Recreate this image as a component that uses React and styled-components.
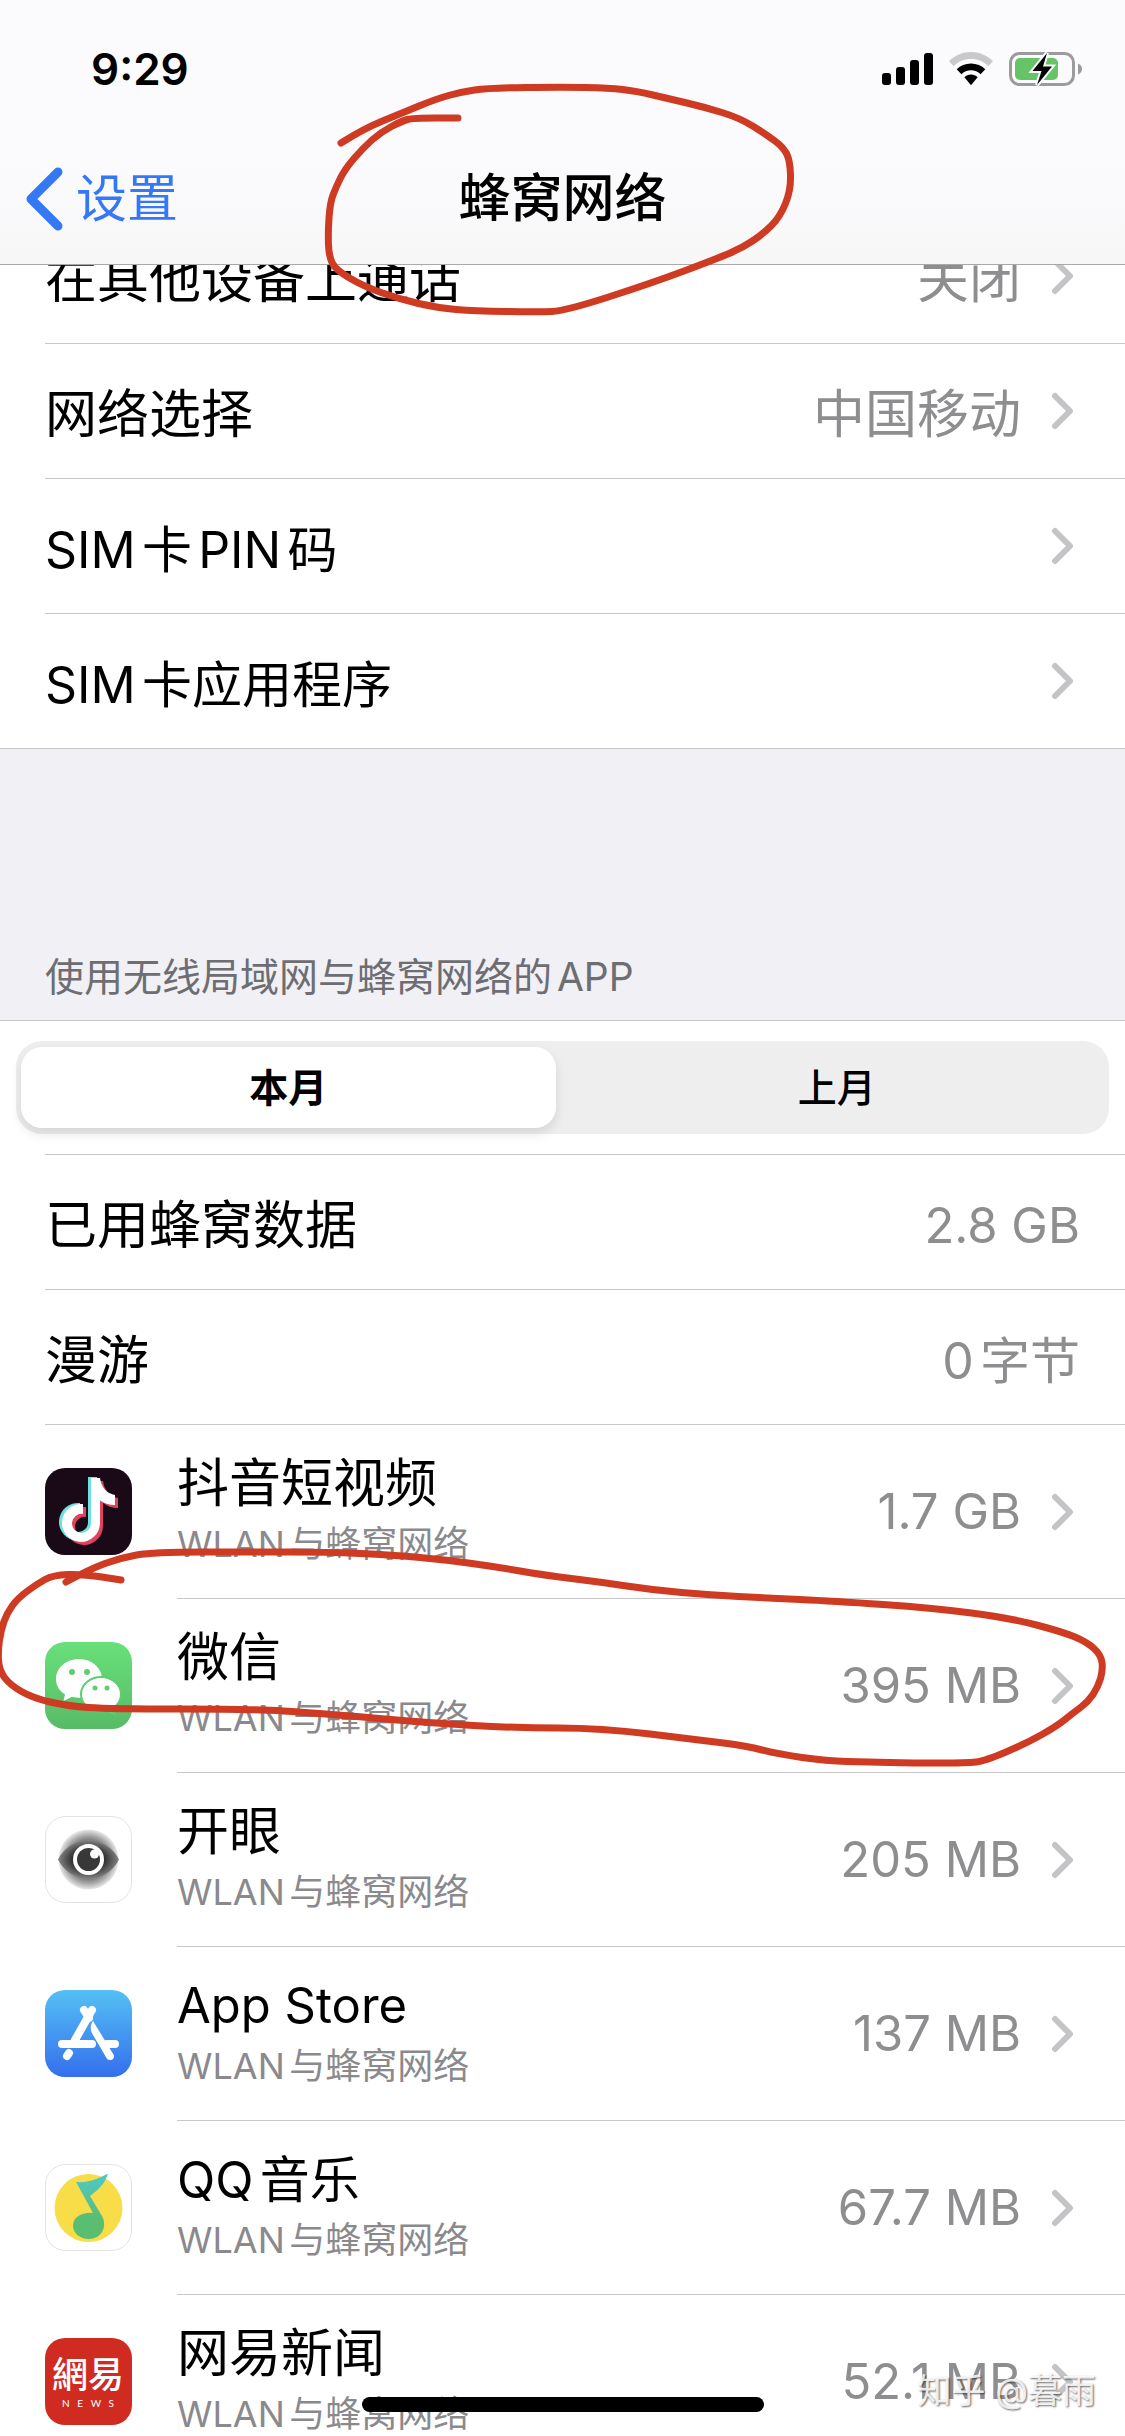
import { useState } from "react";
import styled, { createGlobalStyle } from "styled-components";

const GlobalStyle = createGlobalStyle`
  * {
    box-sizing: border-box;
  }
  body {
    margin: 0;
    background-color: #ffffff;
    font-family: Inter, "Noto Sans CJK SC", sans-serif;
    text-autospace: normal;
  }
  button {
    border: none;
    padding: 0;
    background: none;
    font-family: inherit;
    cursor: pointer;
  }
`;

const Screen = styled.div`
  position: relative;
  display: flex;
  flex-direction: column;
  height: 100vh;
  overflow: hidden;
`;

const Header = styled.header`
  z-index: 1;
  flex: none;
  background: linear-gradient(#fbfbfd 60%, #f7f7f8);
  border-bottom: 1px solid #a9a9ac;
`;

const StatusBar = styled.div`
  display: flex;
  justify-content: space-between;
  align-items: center;
  height: 132px;
  padding: 6px 42px 0 91px;
`;

const Time = styled.span`
  font-size: 44px;
  font-weight: 600;
  line-height: 60px;
`;

const StatusIcons = styled.div`
  display: flex;
  align-items: center;
  gap: 16px;
`;

const NavBar = styled.nav`
  display: grid;
  grid-template-columns: 1fr auto 1fr;
  align-items: center;
  height: 132px;
  padding: 2px 23px 0;
`;

const BackButton = styled.button`
  display: flex;
  align-items: center;
  justify-self: start;
  gap: 11px;
  color: #3578f6;
  font-size: 51px;
  line-height: 60px;
`;

const Title = styled.h1`
  margin: 0;
  font-size: 52px;
  font-weight: 500;
  line-height: 60px;
`;

/* the list is scrolled so that its first row is partly under the header */
const Content = styled.main`
  flex: 1;
  min-height: 0;
  margin-top: -56px;
  overflow: hidden;
`;

const Group = styled.div`
  background-color: #ffffff;
  border-top: ${(props) => (props.$topLine ? "1px solid #c6c6c8" : "none")};
  border-bottom: 1px solid #c6c6c8;
`;

const Row = styled.div`
  display: flex;
  align-items: center;
  justify-content: space-between;
  min-height: 135px;
  margin-left: 45px;
  padding-right: ${(props) => (props.href ? 51 : 45)}px;
  border-bottom: 1px solid #c8c8ca;
  color: #000000;
  line-height: 60px;
  text-decoration: none;

  ${Group} > &:last-child {
    min-height: 134px;
    border-bottom: none;
  }
`;

const sizes = { cjk: 52, mixed: 50, latin: 49 };

const Label = styled.span`
  padding-top: 7px;
  font-size: ${(props) => sizes[props.$script || "cjk"]}px;
`;

const Value = styled(Label)`
  color: #8e8e90;
`;

const Trailing = styled.span`
  display: flex;
  align-items: center;
  gap: 30px;
`;

const SectionTitle = styled.h2`
  margin: 0;
  padding: 198px 45px 13px;
  background-color: #f0f0f5;
  color: #6d6d72;
  font-size: 39px;
  font-weight: 400;
  line-height: 60px;
`;

const SegmentRow = styled.div`
  padding: 20px 16px;
`;

const Segments = styled.div`
  display: flex;
  gap: 14px;
  padding: 6px 5px;
  border-radius: 26px;
  background-color: #eeeeee;
`;

const Segment = styled.button`
  flex: 1;
  height: 81px;
  padding-bottom: 6px;
  border-radius: 21px;
  color: #000000;
  background-color: ${(props) => (props.$active ? "#ffffff" : "transparent")};
  box-shadow: ${(props) =>
    props.$active ? "0 6px 12px rgba(0, 0, 0, 0.1)" : "none"};
  font-size: 39px;
  font-weight: ${(props) => (props.$active ? 600 : 500)};
`;

const Rows = styled.div`
  border-top: 1px solid #c8c8ca;
  margin-left: 45px;

  ${Row} {
    margin-left: 0;
  }
`;

const AppRow = styled.a`
  display: flex;
  align-items: center;
  gap: 45px;
  padding-left: 45px;
  color: #000000;
  text-decoration: none;
`;

const AppBody = styled.div`
  flex: 1;
  display: flex;
  align-items: center;
  justify-content: space-between;
  min-height: 174px;
  padding-right: 51px;
  border-bottom: 1px solid #c8c8ca;
  line-height: 60px;
`;

const AppText = styled.div`
  display: flex;
  flex-direction: column;
  padding-top: 4px;
`;

const AppName = styled.span`
  font-size: ${(props) => sizes[props.$script || "cjk"]}px;
`;

const AppNote = styled.small`
  color: #8a8a8d;
  font-size: 36px;
`;

const Usage = styled.span`
  color: #8e8e90;
  font-size: 49px;
`;

const AppIcon = styled.svg`
  flex: none;
  width: 87px;
  height: 87px;
  margin-bottom: 1px;
`;

const Strokes = styled.svg`
  position: absolute;
  z-index: 2;
  top: 0;
  left: 0;
  width: 100%;
  pointer-events: none;
  fill: none;
  stroke: #cf3a22;
  stroke-width: 7;
  stroke-linecap: round;
  stroke-linejoin: round;
`;

const HomeIndicator = styled.div`
  position: absolute;
  z-index: 2;
  bottom: 24px;
  left: 50%;
  width: 402px;
  height: 15px;
  border-radius: 8px;
  background-color: #000000;
  transform: translateX(-50%);
`;

const Watermark = styled.span`
  position: absolute;
  z-index: 2;
  right: 29px;
  bottom: 20px;
  color: rgba(255, 255, 255, 0.85);
  font-size: 34px;
  line-height: 50px;
  text-shadow: 1px 1px 2px rgba(0, 0, 0, 0.6);
`;

function SignalIcon() {
  return (
    <svg width="51" height="34" viewBox="0 0 51 34">
      <rect x="0" y="21" width="9" height="12" rx="3" />
      <rect x="14" y="15" width="9" height="18" rx="3" />
      <rect x="28" y="8" width="9" height="25" rx="3" />
      <rect x="42" y="1" width="9" height="32" rx="3" />
    </svg>
  );
}

function WifiIcon() {
  return (
    <svg width="44" height="34" viewBox="0 0 44 34">
      <path
        fill="#c9c9cb"
        d="M22 0C13.500 0 6 3.300 0 9.200L4.600 14C9.300 9.500 15.300 7 22 7s12.700 2.500 17.400 7L44 9.200C38 3.300 30.500 0 22 0Z"
      />
      <path d="M22 11.500c-5.600 0-10.600 2.200-14.300 5.800l4.700 4.900c2.500-2.500 5.900-4 9.600-4s7.100 1.500 9.600 4l4.700-4.900C32.600 13.700 27.600 11.500 22 11.500Z" />
      <path d="M22 22.500c-2.600 0-4.900 1-6.600 2.700L22 33.200l6.600-8C26.900 23.500 24.600 22.500 22 22.500Z" />
    </svg>
  );
}

function BatteryIcon() {
  return (
    <svg width="74" height="36" viewBox="0 0 74 36">
      <rect
        x="1.500"
        y="2.500"
        width="63"
        height="31"
        rx="9"
        fill="none"
        stroke="#9b9b9d"
        strokeWidth="3"
      />
      <path fill="#9b9b9d" d="M69 12.500c2.600 1 4 3 4 5.500s-1.400 4.500-4 5.500Z" />
      <rect x="6" y="7" width="43" height="22" rx="5" fill="#65c466" />
      <path
        d="M38 2L23.500 20h9L28 34 43 15.500h-9Z"
        stroke="#fbfbfd"
        strokeWidth="4"
        paintOrder="stroke"
      />
    </svg>
  );
}

function BackIcon() {
  return (
    <svg width="42" height="66" viewBox="0 0 42 66">
      <path
        d="M35 6L8 33l27 27"
        fill="none"
        stroke="#3578f6"
        strokeWidth="9"
        strokeLinecap="round"
        strokeLinejoin="round"
      />
    </svg>
  );
}

function Chevron() {
  return (
    <svg width="23" height="38" viewBox="0 0 23 38">
      <path
        d="M4 4l15 15L4 34"
        fill="none"
        stroke="#c4c4c7"
        strokeWidth="6"
        strokeLinecap="round"
        strokeLinejoin="round"
      />
    </svg>
  );
}

const NOTE =
  "M46 10H55C56 19 62 26 70 27V37C64 37 59 35 55 32V55A19 19 0 1 1 38 36V46A9.500 9.500 0 1 0 46 55Z";

function DouyinIcon() {
  return (
    <AppIcon viewBox="0 0 87 87">
      <rect width="87" height="87" rx="20" fill="#1a0a18" />
      <path d={NOTE} fill="#e0425f" transform="translate(3 3)" />
      <path d={NOTE} fill="#6fe0e0" transform="translate(-3 -1)" />
      <path d={NOTE} fill="#ffffff" />
    </AppIcon>
  );
}

function WechatIcon() {
  return (
    <AppIcon viewBox="0 0 87 87">
      <defs>
        <linearGradient id="wechat" x2="0" y2="1">
          <stop offset="0" stopColor="#68e07a" />
          <stop offset="1" stopColor="#58bb66" />
        </linearGradient>
      </defs>
      <rect width="87" height="87" rx="20" fill="url(#wechat)" />
      <path
        fill="#ffffff"
        d="M34 17C21 17 11 26 11 37c0 6.500 3.400 12 9 15.500L18.500 59l8.500-4.200c2.200.6 4.600 1 7 1 13 0 23-8.500 23-19S47 17 34 17Z"
      />
      <path
        fill="#ffffff"
        stroke="#5fcd70"
        strokeWidth="2"
        d="M56 35c-11 0-20 7.700-20 17.200s9 17.200 20 17.200c2.100 0 4.200-.3 6.200-.9l7 3.500-1.600-5.700C72.600 63 76 58 76 52.200 76 42.700 67 35 56 35Z"
      />
      <g fill="#5fcd70">
        <circle cx="27" cy="30" r="3" />
        <circle cx="42" cy="30" r="3" />
        <circle cx="50" cy="46" r="2.500" />
        <circle cx="62" cy="46" r="2.500" />
      </g>
    </AppIcon>
  );
}

function EyeIcon() {
  return (
    <AppIcon viewBox="0 0 87 87">
      <defs>
        <radialGradient id="glow">
          <stop offset="0.5" stopColor="#555555" />
          <stop offset="0.8" stopColor="#a8a8a8" />
          <stop offset="1" stopColor="#e9e9e9" />
        </radialGradient>
        <radialGradient id="lens">
          <stop offset="0.5" stopColor="#2b2b2b" />
          <stop offset="1" stopColor="#858585" />
        </radialGradient>
      </defs>
      <rect
        x="0.500"
        y="0.500"
        width="86"
        height="86"
        rx="20"
        fill="#ffffff"
        stroke="#e3e3e5"
      />
      <circle cx="43.500" cy="43.500" r="30" fill="url(#glow)" />
      <path
        fill="url(#lens)"
        d="M13 43.500C18 33 30 24 43.500 24S69 33 74 43.500C69 54 57 63 43.500 63S18 54 13 43.500Z"
      />
      <circle cx="43.500" cy="43.500" r="15.500" fill="#ffffff" />
      <circle cx="43.500" cy="43.500" r="11.500" fill="#383838" />
      <circle cx="49.500" cy="38" r="4.500" fill="#ffffff" />
    </AppIcon>
  );
}

function AppStoreIcon() {
  return (
    <AppIcon viewBox="0 0 87 87">
      <defs>
        <linearGradient id="store" x2="0" y2="1">
          <stop offset="0" stopColor="#55c0f5" />
          <stop offset="1" stopColor="#346fed" />
        </linearGradient>
      </defs>
      <rect width="87" height="87" rx="20" fill="url(#store)" />
      <g stroke="#ffffff" strokeWidth="8" strokeLinecap="round">
        <path d="M47 20L30 50M39 20l5 8M17 54H47M62 54h8M24 63l-2 3" />
      </g>
      <path
        fill="#ffffff"
        d="M48 31C45 35 45 40 48 45L61.500 68C64 72.500 71 69 68.500 64.500Z"
      />
    </AppIcon>
  );
}

function QQMusicIcon() {
  return (
    <AppIcon viewBox="0 0 87 87">
      <defs>
        <linearGradient id="qq" x2="0" y2="1">
          <stop offset="0" stopColor="#4cc9cc" />
          <stop offset="0.7" stopColor="#5bbd72" />
        </linearGradient>
      </defs>
      <rect
        x="0.500"
        y="0.500"
        width="86"
        height="86"
        rx="20"
        fill="#ffffff"
        stroke="#e3e3e5"
      />
      <circle cx="43.500" cy="44" r="34" fill="#f8dd49" />
      <path
        fill="url(#qq)"
        d="M31 18C42 19 53 15 63 9.500C60 20 52 27 45 32L57 52C63 63 56 75 44 75C35 75 28 69 28 62C28 53 37 48 48 49Z"
      />
    </AppIcon>
  );
}

function NeteaseIcon() {
  return (
    <AppIcon viewBox="0 0 87 87">
      <rect width="87" height="87" rx="20" fill="#d02b20" />
      <g fill="#ffffff" textAnchor="middle">
        <text
          x="43"
          y="50"
          fontSize="36"
          fontWeight="500"
          fontFamily="'Noto Sans CJK TC', sans-serif"
        >
          網易
        </text>
        <text x="43" y="69" fontSize="10" fontFamily="Lato, sans-serif">
          N&#160;&#160; E&#160;&#160; W&#160;&#160; S
        </text>
      </g>
    </AppIcon>
  );
}

const simRows = [
  { label: "在其他设备上通话", value: "关闭" },
  { label: "网络选择", value: "中国移动" },
  { label: "SIM卡PIN码", script: "mixed" },
  { label: "SIM卡应用程序", script: "mixed" },
];

const usageRows = [
  { label: "已用蜂窝数据", value: "2.8 GB", valueScript: "latin" },
  { label: "漫游", value: "0字节", valueScript: "mixed" },
];

const apps = [
  { name: "抖音短视频", usage: "1.7 GB", Icon: DouyinIcon },
  { name: "微信", usage: "395 MB", Icon: WechatIcon },
  { name: "开眼", usage: "205 MB", Icon: EyeIcon },
  { name: "App Store", usage: "137 MB", Icon: AppStoreIcon, script: "latin" },
  { name: "QQ音乐", usage: "67.7 MB", Icon: QQMusicIcon, script: "mixed" },
  { name: "网易新闻", usage: "52.1 MB", Icon: NeteaseIcon },
];

const titleStroke = [
  [341, 143], [363, 129], [402, 113], [436, 99], [461, 92], [488, 88],
  [563, 87], [609, 88], [636, 91], [670, 99], [704, 107], [740, 118],
  [767, 135], [783, 147], [790, 160], [791, 190], [780, 217], [763, 234],
  [742, 248], [716, 259], [652, 283], [565, 311], [539, 312], [474, 311],
  [438, 308], [399, 299], [363, 286], [336, 270], [329, 257], [328, 233],
  [330, 203], [336, 187], [345, 169], [363, 148], [381, 132], [402, 121],
  [413, 118], [458, 118],
];

const wechatStroke = [
  [66, 1582], [90, 1569], [120, 1558], [153, 1552], [250, 1552], [327, 1552],
  [393, 1555], [447, 1560], [497, 1567], [543, 1575], [600, 1582], [653, 1590],
  [710, 1595], [767, 1598], [833, 1601], [933, 1608], [1010, 1618],
  [1063, 1632], [1087, 1642], [1101, 1655], [1103, 1670], [1098, 1687],
  [1088, 1702], [1073, 1713], [1057, 1726], [1027, 1743], [985, 1761],
  [967, 1763], [913, 1763], [867, 1762], [827, 1761], [777, 1754],
  [747, 1746], [700, 1740], [600, 1728], [517, 1728], [430, 1723],
  [317, 1713], [250, 1709], [110, 1709], [67, 1706], [33, 1698], [10, 1685],
  [-1, 1670], [-2, 1650], [1, 1630], [7, 1613], [18, 1598], [37, 1584],
  [53, 1575], [83, 1574], [121, 1580],
];

// rounds the corners by running a quadratic curve through the midpoints
function smooth(points) {
  const [first, ...rest] = points;
  const last = rest[rest.length - 1];
  const curves = rest.slice(0, -1).map(([x, y], index) => {
    const [nextX, nextY] = rest[index + 1];
    return `Q${x} ${y} ${(x + nextX) / 2} ${(y + nextY) / 2}`;
  });
  return `M${first.join(" ")}${curves.join("")}L${last.join(" ")}`;
}

function App() {
  const [month, setMonth] = useState("本月");

  return (
    <>
      <GlobalStyle />
      <Screen>
        <Header>
          <StatusBar>
            <Time>9:29</Time>
            <StatusIcons>
              <SignalIcon />
              <WifiIcon />
              <BatteryIcon />
            </StatusIcons>
          </StatusBar>
          <NavBar>
            <BackButton>
              <BackIcon />
              设置
            </BackButton>
            <Title>蜂窝网络</Title>
          </NavBar>
        </Header>

        <Content>
          <Group>
            {simRows.map(({ label, value, script }) => (
              <Row as="a" href="#" key={label}>
                <Label $script={script}>{label}</Label>
                <Trailing>
                  {value && <Value>{value}</Value>}
                  <Chevron />
                </Trailing>
              </Row>
            ))}
          </Group>

          <SectionTitle>使用无线局域网与蜂窝网络的APP</SectionTitle>

          <Group $topLine>
            <SegmentRow>
              <Segments>
                {["本月", "上月"].map((item) => (
                  <Segment
                    key={item}
                    $active={item === month}
                    aria-pressed={item === month}
                    onClick={() => setMonth(item)}
                  >
                    {item}
                  </Segment>
                ))}
              </Segments>
            </SegmentRow>
            <Rows>
              {usageRows.map(({ label, value, valueScript }) => (
                <Row key={label}>
                  <Label>{label}</Label>
                  <Value $script={valueScript}>{value}</Value>
                </Row>
              ))}
            </Rows>
            {apps.map(({ name, usage, script, Icon }) => (
              <AppRow href="#" key={name}>
                <Icon />
                <AppBody>
                  <AppText>
                    <AppName $script={script}>{name}</AppName>
                    <AppNote>WLAN与蜂窝网络</AppNote>
                  </AppText>
                  <Trailing>
                    <Usage>{usage}</Usage>
                    <Chevron />
                  </Trailing>
                </AppBody>
              </AppRow>
            ))}
          </Group>
        </Content>

        <Strokes viewBox="0 0 1125 2436">
          <path d={smooth(titleStroke)} />
          <path d={smooth(wechatStroke)} />
        </Strokes>
        <HomeIndicator />
        <Watermark>知乎 @暮雨</Watermark>
      </Screen>
    </>
  );
}

export default App;
